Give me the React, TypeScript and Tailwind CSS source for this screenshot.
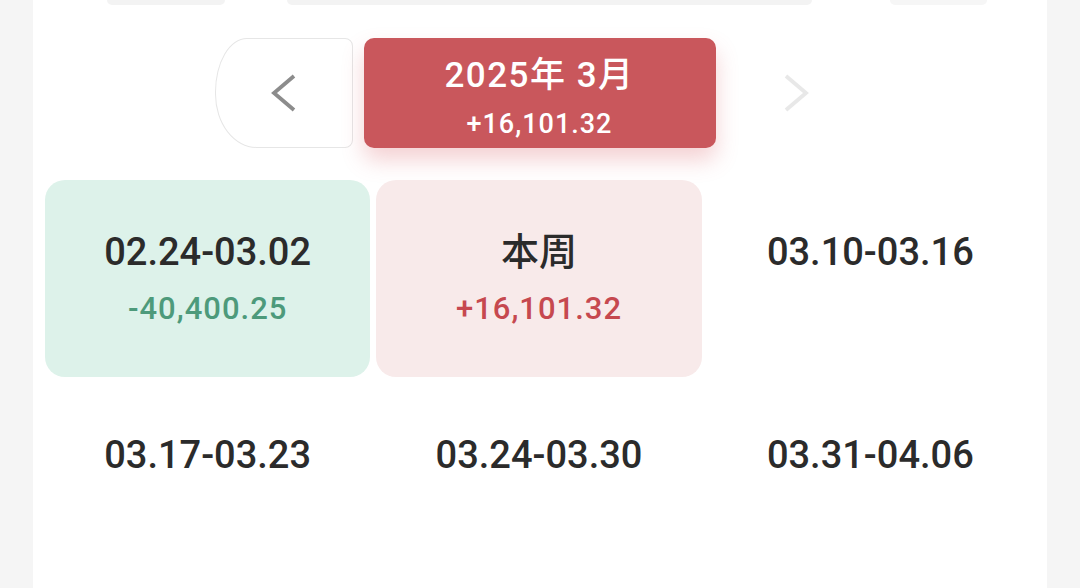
type Week = {
  label: string;
  amount?: string;
  tone?: "up" | "down";
};

const weeks: Week[] = [
  { label: "02.24-03.02", amount: "-40,400.25", tone: "down" },
  { label: "本周", amount: "+16,101.32", tone: "up" },
  { label: "03.10-03.16" },
  { label: "03.17-03.23" },
  { label: "03.24-03.30" },
  { label: "03.31-04.06" },
];

function Chevron({ dir, className }: { dir: "left" | "right"; className?: string }) {
  const points = dir === "left" ? "24,2 4,19 24,36" : "4,2 24,19 4,36";
  return (
    <svg width="28" height="38" viewBox="0 0 28 38" className={className} fill="none">
      <polyline
        points={points}
        stroke="currentColor"
        strokeWidth="3.8"
        strokeLinecap="butt"
        strokeLinejoin="miter"
      />
    </svg>
  );
}

function WeekCell({ week }: { week: Week }) {
  const bg =
    week.tone === "down"
      ? "bg-[#ddf2ea]"
      : week.tone === "up"
        ? "bg-[#f8eaea]"
        : "bg-white";
  const amountColor =
    week.tone === "down" ? "text-[#4d9a7b]" : "text-[#c6484f]";

  return (
    <div className={`h-[197px] rounded-[20px] ${bg} flex flex-col items-center pt-[49px]`}>
      <div className="h-[46px] leading-[46px] text-[38px] font-medium text-[#2b2b2b]">
        {week.label}
      </div>
      {week.amount && (
        <div
          className={`mt-[14px] h-[40px] leading-[40px] text-[31px] font-medium tracking-[1px] ${amountColor}`}
        >
          {week.amount}
        </div>
      )}
    </div>
  );
}

export default function App() {
  return (
    <div
      className="w-[1080px] h-[588px] bg-[#f5f5f5] overflow-hidden"
      style={{ fontFamily: 'Roboto, "Noto Sans CJK SC", sans-serif' }}
    >
      <div className="ml-[33px] w-[1014px] h-full bg-white pl-[12px] pr-[14px]">
        {/* bottoms of the tabs above, cut off by the screenshot */}
        <div className="relative h-[6px]">
          <div className="absolute left-[62px] top-0 w-[118px] h-[5px] rounded-b-[6px] bg-[#f3f3f3]" />
          <div className="absolute left-[242px] top-0 w-[525px] h-[5px] rounded-b-[6px] bg-[#f3f3f3]" />
          <div className="absolute left-[845px] top-0 w-[97px] h-[5px] rounded-b-[6px] bg-[#f6f6f6]" />
        </div>

        <div className="mt-[32px] ml-[1px] flex justify-center gap-[11px]">
          <button className="w-[138px] h-[110px] border border-[#e6e6e6] rounded-tl-[32px_54px] rounded-bl-[42px_54px] rounded-r-[8px] flex items-center justify-center">
            <Chevron dir="left" className="text-[#8c8c8c]" />
          </button>
          <div className="w-[352px] h-[110px] rounded-[10px] bg-[#c9575c] shadow-[0_12px_22px_rgba(214,90,96,0.28)] flex flex-col items-center text-white">
            <div className="mt-[16px] h-[44px] leading-[44px] text-[35px] font-medium tracking-[1.5px]">
              2025年 3月
            </div>
            <div className="mt-[9px] h-[34px] leading-[34px] text-[27px] font-medium tracking-[1px]">
              +16,101.32
            </div>
          </div>
          <button className="w-[138px] h-[110px] flex items-center justify-center">
            <Chevron dir="right" className="text-[#e8e8e8]" />
          </button>
        </div>

        <div className="mt-[32px] grid grid-cols-3 gap-[6px]">
          {weeks.map((w) => (
            <WeekCell key={w.label} week={w} />
          ))}
        </div>
      </div>
    </div>
  );
}
